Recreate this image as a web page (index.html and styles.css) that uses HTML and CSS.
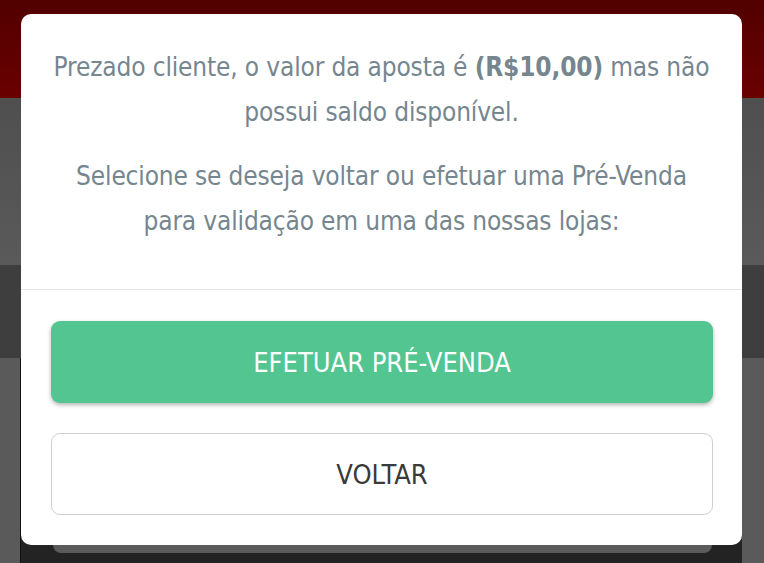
FILE: index.html
```html
<!DOCTYPE html>
<html lang="pt-BR">

<head>
    <meta charset="UTF-8" />
    <meta name="viewport" content="width=device-width, initial-scale=1.0" />
    <title>Pré-Venda</title>
    <link rel="stylesheet" href="styles.css">
</head>

<body>
    <div class="page">
        <div class="topbar"></div>
        <div class="band band-light"></div>
        <div class="band band-dark"></div>
        <div class="content">
            <div class="panel">
                <div class="card"></div>
            </div>
        </div>
    </div>

    <div class="modal">
        <div class="modal-body">
            <p>Prezado cliente, o valor da aposta é <strong>(R$10,00)</strong> mas não<br>possui saldo disponível.</p>
            <p>Selecione se deseja voltar ou efetuar uma Pré-Venda<br>para validação em uma das nossas lojas:</p>
        </div>
        <div class="modal-footer">
            <button class="btn btn-primary">EFETUAR PRÉ-VENDA</button>
            <button class="btn btn-outline">VOLTAR</button>
        </div>
    </div>
</body>

</html>
```

FILE: styles.css
```css
body {
    margin: 0;
    font-family: "DejaVu Sans Condensed", "Liberation Sans", sans-serif;
    background: #575757;
    overflow: hidden;
}

.page {
    display: flex;
    flex-direction: column;
    height: 563px;
}

.topbar {
    height: 98px;
    background: linear-gradient(to bottom, #520000, #6a0000);
}

.band-light {
    height: 167px;
    background: linear-gradient(to bottom, #4f4f4f, #5a5a5a);
}

.band-dark {
    height: 93px;
    background: #3e3e3e;
}

.content {
    flex: 1;
    display: flex;
    padding: 0 22px 0 20px;
    background: #5a5a5a;
}

.panel {
    flex: 1;
    display: flex;
    align-items: flex-end;
    padding: 0 30px 10px 32px;
    background: #232323;
    border-left: 1px solid #111;
}

.card {
    flex: 1;
    height: 40px;
    background: #5b5b5b;
    border-radius: 0 0 8px 8px;
}

.modal {
    position: absolute;
    top: 14px;
    left: 21px;
    width: 721px;
    height: 531px;
    background: #fff;
    border-radius: 10px;
    display: flex;
    flex-direction: column;
}

.modal-body {
    padding: 31px 20px 45px;
    text-align: center;
    color: #76868f;
    font-size: 26px;
    letter-spacing: -0.15px;
    line-height: 45px;
    white-space: nowrap;
    border-bottom: 1px solid #e6e6e6;
}

.modal-body p {
    margin: 0;
}

.modal-body p + p {
    margin-top: 19px;
}

.modal-body strong {
    font-weight: bold;
}

.modal-footer {
    padding: 31px 29px 30px 30px;
    display: flex;
    flex-direction: column;
    gap: 30px;
}

.btn {
    height: 82px;
    width: 100%;
    border-radius: 9px;
    font-family: inherit;
    font-size: 27px;
    cursor: pointer;
}

.btn-primary {
    background: #52c591;
    color: #fff;
    border: none;
    box-shadow: 0 2px 4px rgba(0, 0, 0, 0.3);
}

.btn-outline {
    background: #fff;
    color: #3a3a3a;
    border: 1px solid #cfcfcf;
}
```
